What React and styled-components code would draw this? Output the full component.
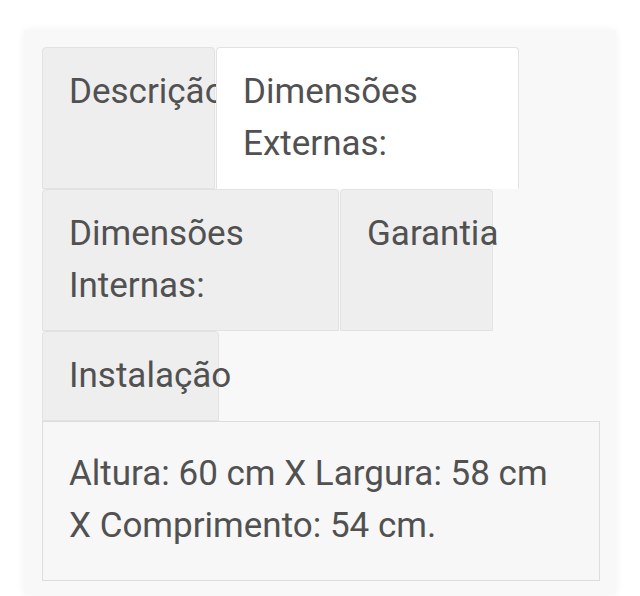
import React from 'react';
import styled, { createGlobalStyle } from 'styled-components';

const GlobalStyle = createGlobalStyle`
  body {
    margin: 0;
    background: #ffffff;
    font-family: Roboto, "Liberation Sans", sans-serif;
  }
`;

const tabs = [
  { label: 'Descrição', width: 173 },
  { label: 'Dimensões Externas:', width: 303, active: true },
  { label: 'Dimensões Internas:', width: 297 },
  { label: 'Garantia', width: 153 },
  { label: 'Instalação', width: 177 },
];

function App() {
  return (
    <Page>
      <GlobalStyle />
      <Card>
        <TabList>
          {tabs.map((t) => (
            <Tab key={t.label} $width={t.width} $active={t.active}>
              {t.label}
            </Tab>
          ))}
        </TabList>
        <Panel>Altura: 60 cm X Largura: 58 cm X Comprimento: 54 cm.</Panel>
      </Card>
    </Page>
  );
}

const Page = styled.div`
  padding: 30px 24px 4px 24px;
  min-height: 596px;
  box-sizing: border-box;
`;

const Card = styled.div`
  background: #f8f8f8;
  padding: 17px 16px 14px 18px;
  box-shadow: 0 0 8px rgba(0, 0, 0, 0.06);
`;

const TabList = styled.div`
  display: flex;
  flex-wrap: wrap;
  align-items: stretch;
`;

const Tab = styled.div`
  box-sizing: border-box;
  width: ${(p) => p.$width}px;
  padding: 18px 0 18px 26px;
  margin-right: ${(p) => (p.$active ? 0 : 1)}px;
  background: ${(p) => (p.$active ? '#ffffff' : '#eeeeee')};
  border: 1px solid #e2e2e2;
  border-bottom-color: ${(p) => (p.$active ? '#ffffff' : '#e2e2e2')};
  border-radius: 4px 4px 0 0;
  font-size: 35px;
  line-height: 52px;
  color: #515151;
`;

const Panel = styled.div`
  border: 1px solid #dddddd;
  background: #f7f7f7;
  padding: 26px 36px 28px 26px;
  font-size: 35px;
  line-height: 52px;
  color: #515151;
`;

export default App;
